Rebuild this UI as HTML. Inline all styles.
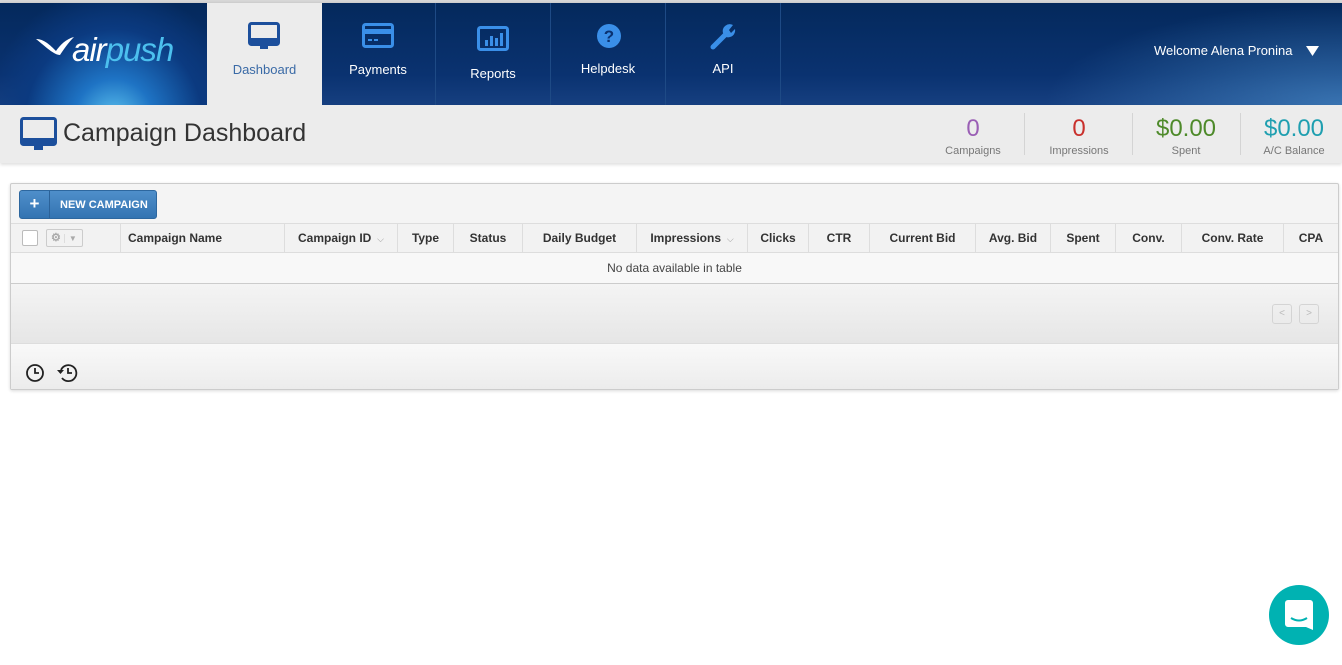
<!DOCTYPE html>
<html><head><meta charset="utf-8"><style>
*{box-sizing:border-box;margin:0;padding:0}
body{width:1342px;height:665px;overflow:hidden;background:#fff;font-family:"Liberation Sans",Arial,sans-serif;position:relative}
.top{position:absolute;left:0;top:0;width:1342px;height:3px;background:#d8d8d8}
.nav{position:absolute;left:0;top:3px;width:1342px;height:102px;background:linear-gradient(180deg,#04295c 0%,#0a3270 70%,#163f80 100%);box-shadow:0 2px 4px rgba(0,0,0,.4)}
.nav:after{content:"";position:absolute;right:0;top:0;width:300px;height:102px;background:radial-gradient(ellipse at 100% 100%,rgba(80,150,210,.6),rgba(0,0,0,0) 70%)}
.logo{position:absolute;left:0;top:0;width:207px;height:102px;background:radial-gradient(ellipse at 55% 115%,#5fc6f0 0%,#1e73c4 25%,#0b3a80 55%,rgba(4,41,92,0) 80%)}
.logo .t{position:absolute;left:72px;top:28px;font-size:33px;font-style:italic;color:#fff;letter-spacing:-1px}
.logo .t span{color:#4cc0ee}
.tab{position:absolute;top:0;width:115px;height:102px;color:#fff;font-size:13px;text-align:center;border-right:1px solid #1e4a85}
.tab svg{position:absolute;left:41px;top:19px}
.tab .l{position:absolute;left:0;right:0;top:58px}
.tab.act{background:#ececec;color:#3a6aa6;height:105px;border:none;z-index:2}
.welcome{position:absolute;left:1154px;top:43px;color:#fff;font-size:13px;z-index:2}
.sub{position:absolute;left:0;top:105px;width:1342px;height:58px;background:#ececec;box-shadow:0 2px 3px rgba(0,0,0,.12)}
.title{position:absolute;left:63px;top:14px;font-size:25px;color:#333}
.stat{position:absolute;top:10px;text-align:center;color:#777;font-size:11px}
.stat b{display:block;font-weight:normal;font-size:24px;line-height:28px;margin-bottom:2px}
.sep{position:absolute;top:8px;width:1px;height:42px;background:#d4d4d4}
.panel{position:absolute;left:10px;top:183px;width:1329px;height:207px;border:1px solid #ccc;border-radius:2px;background:#f4f4f4;box-shadow:0 1px 3px rgba(0,0,0,.15)}
.btn{position:absolute;left:8px;top:6px;width:138px;height:29px;background:linear-gradient(#4f8fca,#3374b2);border:1px solid #2d679f;border-radius:3px;color:#fff;font-size:11px;font-weight:bold}
.btn .p{position:absolute;left:0;top:0;width:30px;height:27px;border-right:1px solid #2b6299;text-align:center;font-size:17px;line-height:26px}
.btn .n{position:absolute;left:40px;top:8px}
.th{position:absolute;top:39px;left:0;width:1327px;height:30px;background:#f2f2f2;border-top:1px solid #ddd;border-bottom:1px solid #ddd}
.th div{position:absolute;top:0;height:29px;line-height:28px;font-size:12px;font-weight:bold;color:#333;border-left:1px solid #ddd;text-align:center}
.nd{position:absolute;top:69px;left:0;width:1327px;height:31px;background:#f8f8f8;border-bottom:1px solid #ccc;text-align:center;font-size:12px;line-height:30px;color:#444}
.pg{position:absolute;top:100px;left:0;width:1327px;height:60px;background:linear-gradient(#f4f4f4,#e6e6e6);border-bottom:1px solid #ddd}
.pb{position:absolute;top:20px;width:20px;height:20px;border:1px solid #d4d4d4;border-radius:3px;font-size:10px;color:#bbb;text-align:center;line-height:18px}
.ft{position:absolute;top:160px;left:0;width:1327px;height:45px;background:linear-gradient(#f9f9f9,#ececec)}
.chat{position:absolute;left:1269px;top:585px;width:60px;height:60px;border-radius:50%;background:#00b2b2}
</style></head><body>
<div class="top"></div>
<div class="nav">
 <div class="logo"><svg style="position:absolute;left:36px;top:32px" width="40" height="22" viewBox="0 0 40 22"><path d="M0 4 C8 4 14 10 20 16 C24 10 30 4 38 2 C32 8 28 14 24 20 C18 20 10 12 0 4Z" fill="#fff"/></svg><div class="t">air<span>push</span></div></div>
 <div class="tab act" style="left:207px"><svg width="32" height="30" viewBox="0 0 32 30"><rect x="1.5" y="1.5" width="29" height="21" rx="2" fill="none" stroke="#1c4f9c" stroke-width="3"/><rect x="1" y="16" width="30" height="7" fill="#1c4f9c"/><rect x="12" y="23" width="8" height="4" fill="#1c4f9c"/></svg><div class="l" style="top:59px">Dashboard</div></div>
 <div class="tab" style="left:321px"><svg width="32" height="26" viewBox="0 0 32 26" style="top:20px"><rect x="1.5" y="1.5" width="29" height="22" rx="2" fill="none" stroke="#3a8fe8" stroke-width="3"/><rect x="1" y="6" width="30" height="5" fill="#3a8fe8"/><rect x="6" y="16" width="4" height="2" fill="#3a8fe8"/><rect x="12" y="16" width="4" height="2" fill="#3a8fe8"/></svg><div class="l" style="top:59px">Payments</div></div>
 <div class="tab" style="left:436px"><svg width="32" height="26" viewBox="0 0 32 26" style="top:23px"><rect x="1.5" y="1.5" width="29" height="22" rx="2" fill="none" stroke="#3a8fe8" stroke-width="3"/><rect x="8" y="14" width="3" height="6" fill="#3a8fe8"/><rect x="13" y="10" width="3" height="10" fill="#3a8fe8"/><rect x="18" y="12" width="3" height="8" fill="#3a8fe8"/><rect x="23" y="7" width="3" height="13" fill="#3a8fe8"/></svg><div class="l" style="top:63px">Reports</div></div>
 <div class="tab" style="left:551px"><svg width="26" height="26" viewBox="0 0 26 26" style="left:45px;top:20px"><circle cx="13" cy="13" r="12" fill="#3a8fe8"/><text x="13" y="19" text-anchor="middle" font-size="17" font-weight="bold" fill="#0a3270" font-family="Liberation Sans">?</text></svg><div class="l" style="top:58px">Helpdesk</div></div>
 <div class="tab" style="left:666px"><svg width="28" height="28" viewBox="0 0 28 28" style="left:43px;top:20px"><path d="M4 24 L16 12" stroke="#3a8fe8" stroke-width="5" stroke-linecap="round"/><path d="M14 10 A7 7 0 0 1 24 2 L20 7 L22 10 L26 6 A7 7 0 0 1 17 14Z" fill="#3a8fe8"/></svg><div class="l" style="top:58px">API</div></div>
</div>
<div class="welcome">Welcome Alena Pronina <svg width="13" height="10" viewBox="0 0 13 10" style="margin-left:10px;vertical-align:-1px"><path d="M0 0 H13 L6.5 10Z" fill="#fff"/></svg></div>
<div class="sub">
 <svg style="position:absolute;left:20px;top:12px" width="37" height="36" viewBox="0 0 37 36"><rect x="1.5" y="1.5" width="34" height="26" rx="2" fill="none" stroke="#1c4f9c" stroke-width="3"/><rect x="1" y="21" width="35" height="7" fill="#1c4f9c"/><rect x="14" y="28" width="9" height="5" fill="#1c4f9c"/></svg>
 <div class="title">Campaign Dashboard</div>
 <div class="stat" style="left:938px;width:70px"><b style="color:#9a5fb5">0</b>Campaigns</div>
 <div class="sep" style="left:1024px"></div>
 <div class="stat" style="left:1040px;width:78px"><b style="color:#c9302c">0</b>Impressions</div>
 <div class="sep" style="left:1132px"></div>
 <div class="stat" style="left:1150px;width:72px"><b style="color:#4e8a2a">$0.00</b>Spent</div>
 <div class="sep" style="left:1240px"></div>
 <div class="stat" style="left:1258px;width:72px"><b style="color:#1f9fb0">$0.00</b>A/C Balance</div>
</div>
<div class="panel">
 <div class="btn"><div class="p">+</div><div class="n">NEW CAMPAIGN</div></div>
 <div class="th">
  <div style="left:0;width:110px;border:none"><span style="position:absolute;left:11px;top:6px;width:16px;height:16px;border:1px solid #bbb;background:#fff;border-radius:2px"></span><span style="position:absolute;left:35px;top:5px;width:37px;height:18px;border:1px solid #ccc;border-radius:2px;color:#aaa;font-size:11px;line-height:16px;text-align:left;padding-left:4px">⚙ <span style="border-left:1px solid #ddd;padding-left:4px;font-size:8px">▼</span></span></div>
  <div style="left:109px;width:164px;text-align:left;padding-left:7px">Campaign Name</div>
  <div style="left:273px;width:113px">Campaign ID <span style="color:#999;font-weight:normal;font-size:9px">&nbsp;⌵</span></div>
  <div style="left:386px;width:56px">Type</div>
  <div style="left:442px;width:69px">Status</div>
  <div style="left:511px;width:114px">Daily Budget</div>
  <div style="left:625px;width:111px">Impressions <span style="color:#999;font-weight:normal;font-size:9px">&nbsp;⌵</span></div>
  <div style="left:736px;width:61px">Clicks</div>
  <div style="left:797px;width:61px">CTR</div>
  <div style="left:858px;width:106px">Current Bid</div>
  <div style="left:964px;width:75px">Avg. Bid</div>
  <div style="left:1039px;width:65px">Spent</div>
  <div style="left:1104px;width:66px">Conv.</div>
  <div style="left:1170px;width:102px">Conv. Rate</div>
  <div style="left:1272px;width:55px">CPA</div>
 </div>
 <div class="nd">No data available in table</div>
 <div class="pg"><div class="pb" style="left:1261px">&lt;</div><div class="pb" style="left:1288px">&gt;</div></div>
 <div class="ft">
  <svg style="position:absolute;left:14px;top:19px" width="20" height="20" viewBox="0 0 20 20"><circle cx="10" cy="10" r="8" fill="none" stroke="#222" stroke-width="1.8"/><path d="M10 5 V10 H14" fill="none" stroke="#222" stroke-width="1.8"/></svg>
  <svg style="position:absolute;left:45px;top:19px" width="22" height="20" viewBox="0 0 22 20"><path d="M5 7 A8 8 0 1 1 6 15" fill="none" stroke="#222" stroke-width="1.8"/><path d="M1 7 H8 L4.5 11Z" fill="#222"/><path d="M12 5 V10 H16" fill="none" stroke="#222" stroke-width="1.8"/></svg>
 </div>
</div>
<div class="chat"><svg style="position:absolute;left:16px;top:15px" width="28" height="32" viewBox="0 0 28 32"><path d="M3 0 H25 A3 3 0 0 1 28 3 V30 L21 27 H3 A3 3 0 0 1 0 24 V3 A3 3 0 0 1 3 0Z" fill="#fff"/><path d="M6 18 Q14 23 22 18" fill="none" stroke="#00b2b2" stroke-width="2"/></svg></div>
</body></html>
